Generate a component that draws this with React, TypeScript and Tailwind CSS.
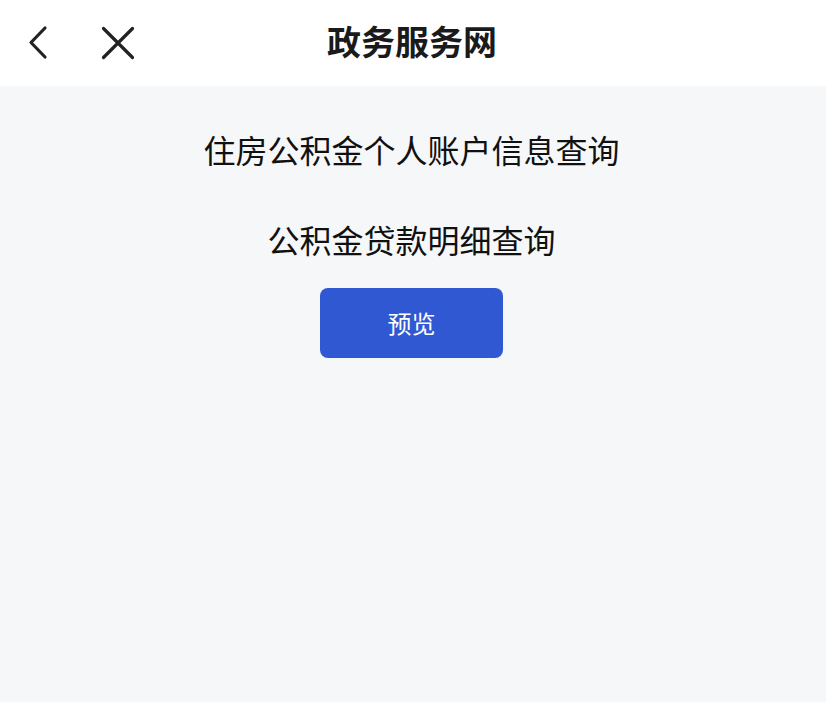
const font = { fontFamily: '"Noto Sans CJK SC", "Noto Sans", sans-serif' };

function BackIcon() {
	return (
		<svg width="24" height="36" viewBox="0 0 24 36" fill="none">
			<path d="M19 3 L5 17.5 L19 32" stroke="#222" strokeWidth="3.2" strokeLinecap="round" strokeLinejoin="round" />
		</svg>
	);
}

function CloseIcon() {
	return (
		<svg width="34" height="34" viewBox="0 0 34 34" fill="none">
			<path d="M2.5 2.5 L31.5 31.5 M31.5 2.5 L2.5 31.5" stroke="#222" strokeWidth="3.2" strokeLinecap="round" />
		</svg>
	);
}

export default function App() {
	return (
		<div className="flex h-[702px] w-[826px] flex-col bg-[#f6f7f9]" style={font}>
			<header className="relative flex h-[86px] items-center bg-white">
				<div className="flex items-center gap-[51px] pl-[26px]">
					<BackIcon />
					<CloseIcon />
				</div>
				<h1 className="absolute inset-x-0 top-[20px] pr-[2px] text-center text-[34px] leading-[42px] font-bold text-[#1a1a1a]">
					政务服务网
				</h1>
			</header>
			<main className="flex flex-col items-center pt-[43px] pr-[3px]">
				<p className="text-[32px] leading-[40px] text-[#111]">住房公积金个人账户信息查询</p>
				<p className="mt-[50px] text-[32px] leading-[40px] text-[#111]">公积金贷款明细查询</p>
				<button className="mt-[29px] flex h-[70px] w-[183px] items-center justify-center rounded-[8px] bg-[#3158d3] text-[24px] text-white">
					预览
				</button>
			</main>
		</div>
	);
}
